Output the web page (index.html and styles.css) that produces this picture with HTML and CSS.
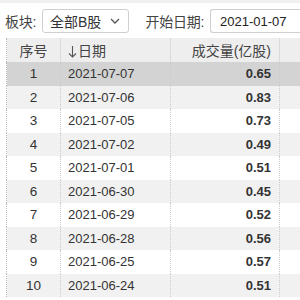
FILE: index.html
```html
<!DOCTYPE html>
<html>
<head>
<meta charset="utf-8">
<link rel="stylesheet" href="styles.css">
</head>
<body>
<div class="strip"></div>
<div class="toolbar">
  <span class="label">板块:</span>
  <div class="select"><span>全部B股</span>
    <svg class="chev" width="10" height="6" viewBox="0 0 10 6"><path d="M1 1 L5 5 L9 1" fill="none" stroke="#555" stroke-width="1.3"/></svg>
  </div>
  <span class="label label2">开始日期:</span>
  <div class="input">2021-01-07</div>
</div>
<div class="tablewrap">
<table class="grid">
  <thead>
    <tr><th class="c1">序号</th><th class="c2"><svg class="arrow" width="9" height="13" viewBox="0 0 9 13"><path d="M4.5 1 V12 M1 8.5 L4.5 12 L8 8.5" fill="none" stroke="#555" stroke-width="1.1"/></svg>日期</th><th class="c3">成交量(亿股)</th><th class="c4"></th></tr>
  </thead>
  <tbody>
    <tr class="sel"><td class="c1">1</td><td class="c2">2021-07-07</td><td class="c3">0.65</td><td class="c4"></td></tr>
    <tr class="even"><td class="c1">2</td><td class="c2">2021-07-06</td><td class="c3">0.83</td><td class="c4"></td></tr>
    <tr><td class="c1">3</td><td class="c2">2021-07-05</td><td class="c3">0.73</td><td class="c4"></td></tr>
    <tr class="even"><td class="c1">4</td><td class="c2">2021-07-02</td><td class="c3">0.49</td><td class="c4"></td></tr>
    <tr><td class="c1">5</td><td class="c2">2021-07-01</td><td class="c3">0.51</td><td class="c4"></td></tr>
    <tr class="even"><td class="c1">6</td><td class="c2">2021-06-30</td><td class="c3">0.45</td><td class="c4"></td></tr>
    <tr><td class="c1">7</td><td class="c2">2021-06-29</td><td class="c3">0.52</td><td class="c4"></td></tr>
    <tr class="even"><td class="c1">8</td><td class="c2">2021-06-28</td><td class="c3">0.56</td><td class="c4"></td></tr>
    <tr><td class="c1">9</td><td class="c2">2021-06-25</td><td class="c3">0.57</td><td class="c4"></td></tr>
    <tr class="even"><td class="c1">10</td><td class="c2">2021-06-24</td><td class="c3">0.51</td><td class="c4"></td></tr>
  </tbody>
</table>
</div>
</body>
</html>
```
FILE: styles.css
```css
html, body {
  margin: 0;
  padding: 0;
  background: #fff;
  width: 300px;
  height: 300px;
  overflow: hidden;
  font-family: "Liberation Sans", Arial, "Noto Sans CJK SC", sans-serif;
  color: #333;
}
.strip {
  height: 3px;
  background: #f0f0f0;
}
.toolbar {
  display: flex;
  align-items: center;
  height: 24px;
  padding: 6px 0 0 5px;
  margin-bottom: 5px;
  white-space: nowrap;
  overflow: hidden;
}
.label {
  font-size: 14px;
  color: #444;
  letter-spacing: -0.3px;
}
.label2 {
  margin-left: 17px;
}
.select {
  box-sizing: border-box;
  margin-left: 6px;
  width: 91px;
  height: 24px;
  border: 1px solid #cfcfcf;
  border-radius: 3px;
  display: flex;
  align-items: center;
  justify-content: space-between;
  padding: 0 8px 0 7px;
  font-size: 14px;
  color: #333;
}
.chev {
  display: block;
}
.input {
  box-sizing: border-box;
  margin-left: 6px;
  flex: 0 0 auto;
  width: 90px;
  height: 24px;
  border: 1px solid #cfcfcf;
  border-right: none;
  border-radius: 3px 0 0 3px;
  padding: 0 0 0 9px;
  display: flex;
  align-items: center;
  font-size: 13px;
  color: #222;
}
.tablewrap {
  padding-left: 6px;
}
.grid {
  border-collapse: collapse;
  table-layout: fixed;
  width: 294px;
  font-size: 13px;
  border-left: 1px dotted #bbb;
}
.grid th {
  height: 24px;
  padding: 0;
  background: #eeeeee;
  font-weight: normal;
  font-size: 14px;
  color: #444;
  border-left: 1px solid #dadada;
}
.grid td {
  height: 23.5px;
  padding: 0;
  border-left: 1px dotted #ccc;
}
.grid th.c1, .grid td.c1 { border-left: none; }
.arrow {
  vertical-align: -2px;
  margin-right: 1px;
}
.c1 { width: 53px; text-align: center; }
.c2 { width: 102px; text-align: left; padding-left: 7px !important; }
.c3 { width: 100px; text-align: right; padding-right: 8px !important; }
td.c1 { font-size: 13.5px; }
td.c3 { font-weight: bold; }
tr.sel td { background: #d3d3d3; }
tr.even td { background: #f1f1f1; }
```
